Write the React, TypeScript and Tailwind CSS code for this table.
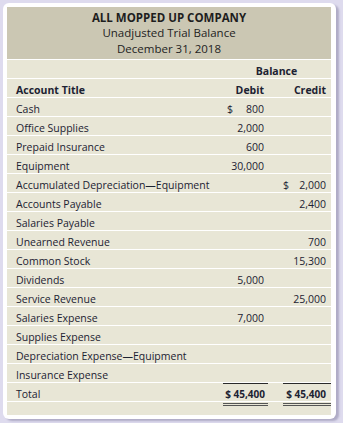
const rows: { title: string; debit?: string; credit?: string; dollarD?: boolean; dollarC?: boolean }[] = [
  { title: "Cash", debit: "800", dollarD: true },
  { title: "Office Supplies", debit: "2,000" },
  { title: "Prepaid Insurance", debit: "600" },
  { title: "Equipment", debit: "30,000" },
  { title: "Accumulated Depreciation\u2014Equipment", credit: "2,000", dollarC: true },
  { title: "Accounts Payable", credit: "2,400" },
  { title: "Salaries Payable" },
  { title: "Unearned Revenue", credit: "700" },
  { title: "Common Stock", credit: "15,300" },
  { title: "Dividends", debit: "5,000" },
  { title: "Service Revenue", credit: "25,000" },
  { title: "Salaries Expense", debit: "7,000" },
  { title: "Supplies Expense" },
  { title: "Depreciation Expense\u2014Equipment" },
  { title: "Insurance Expense" },
]

export default function App() {
  return (
    <div
      className="w-[343px] h-[423px] bg-[#dedbee] pl-[3px] pt-[3px] text-[#1c2232]"
      style={{ fontFamily: '"Open Sans", "Noto Sans", sans-serif' }}
    >
      <div className="w-[333px] h-[416px] rounded-[6px] bg-white p-[4px] pr-[5px] shadow-[3px_2px_2px_rgba(120,115,150,0.45)]">
        <div className="h-full bg-[#e8e6d6] flex flex-col">
          {/* Header */}
          <div className="h-[53px] bg-[#cbc7b3] flex flex-col items-center justify-center text-[11.5px] leading-[15.5px] text-[#1e1e1e] border-b border-white">
            <div className="font-bold">ALL MOPPED UP COMPANY</div>
            <div>Unadjusted Trial Balance</div>
            <div>December 31, 2018</div>
          </div>

          {/* Balance */}
          <div className="h-[19px] flex items-center pt-[5px] border-b border-white text-[10.5px] font-bold">
            <div className="flex-1" />
            <div className="w-[108px] text-center pr-[1px]">Balance</div>
          </div>

          {/* Column titles */}
          <div className="h-[19px] flex items-center pt-[5px] border-b border-white text-[10.5px] font-bold">
            <div className="flex-1 pl-[9px]">Account Title</div>
            <div className="w-[45px] text-right pr-[4px]">Debit</div>
            <div className="w-[15px]" />
            <div className="w-[48px] text-right pr-[5px]">Credit</div>
          </div>

          {rows.map((r) => (
            <div key={r.title} className="h-[19px] flex items-center pt-[5px] border-b border-white text-[10.5px] font-medium">
              <div className="flex-1 pl-[9px] whitespace-nowrap">{r.title}</div>
              <div className="w-[45px] flex justify-between pl-[4px] pr-[4px]">
                <span>{r.dollarD ? "$" : ""}</span>
                <span>{r.debit}</span>
              </div>
              <div className="w-[15px]" />
              <div className="w-[48px] flex justify-between pr-[5px]">
                <span>{r.dollarC ? "$" : ""}</span>
                <span>{r.credit}</span>
              </div>
            </div>
          ))}

          {/* Total */}
          <div className="h-[19px] flex border-b border-white text-[10.5px] font-medium">
            <div className="flex-1 pl-[9px] pt-[5px] flex items-center">Total</div>
            <div className="w-[45px] flex items-center justify-end pt-[4px] pr-[3px] border-t border-[#2a2a2a] text-[10px] font-bold whitespace-nowrap">$ 45,400</div>
            <div className="w-[15px]" />
            <div className="w-[48px] flex items-center justify-end pt-[4px] pr-[5px] border-t border-[#2a2a2a] text-[10px] font-bold whitespace-nowrap">$ 45,400</div>
          </div>
          <div className="flex pt-[1px]">
            <div className="flex-1" />
            <div className="w-[45px] h-0 border-b-[3px] border-double border-[#555555]" />
            <div className="w-[15px]" />
            <div className="w-[48px] h-0 border-b-[3px] border-double border-[#555555]" />
          </div>
        </div>
      </div>
    </div>
  )
}
